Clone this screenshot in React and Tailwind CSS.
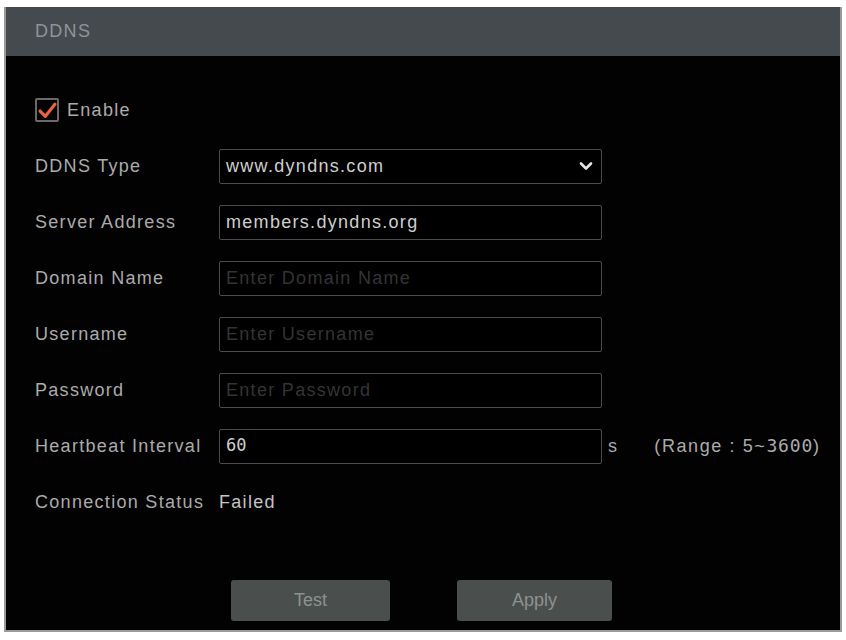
import React from "react";

const sans = "font-['Liberation_Sans',Arial,sans-serif]";
const mono = "font-['DejaVu_Sans_Mono',monospace]";

const Row = ({ label, children }) => (
  <div className="flex h-[56px] items-center">
    <div className="w-[184px] shrink-0 text-[#ababab]">{label}</div>
    {children}
  </div>
);

const Field = ({ value, placeholder, className = "" }) => (
  <div
    className={`flex h-[35px] w-[383px] items-center rounded-[2px] border border-[#4a4a4a] bg-black pl-[6px] ${className}`}
  >
    {value ? (
      <span className="text-[#cfcfcf]">{value}</span>
    ) : (
      <span className="text-[#343434]">{placeholder}</span>
    )}
  </div>
);

export default function App() {
  return (
    <div className={`h-[640px] w-[846px] bg-white px-[4px] pt-[7px] ${sans}`}>
      <div className="flex h-[625px] w-[838px] flex-col border-x-2 border-b-2 border-[#9a9a9a] bg-[#020203]">
        {/* title bar */}
        <div className="flex h-[49px] shrink-0 items-center bg-[#454a4f] pl-[29px] text-[18px] tracking-[1.3px] text-[#8e9499]">
          DDNS
        </div>

        <div className="flex flex-col pl-[29px] pt-[26px] text-[18px] tracking-[1.3px]">
          <div className="flex h-[56px] items-center gap-[8px]">
            <div className="flex h-[24px] w-[24px] items-center justify-center rounded-[2px] border-2 border-[#6a6a6a]">
              <svg width="19" height="17" viewBox="0 0 18 16">
                <path
                  d="M2 8.5 L7 13.5 L16 2"
                  fill="none"
                  stroke="#e8643a"
                  strokeWidth="3"
                  strokeLinecap="round"
                  strokeLinejoin="round"
                />
              </svg>
            </div>
            <span className="text-[#ababab]">Enable</span>
          </div>

          <Row label="DDNS Type">
            <div className="flex h-[35px] w-[383px] items-center justify-between rounded-[2px] border border-[#4a4a4a] bg-black pl-[6px] pr-[8px]">
              <span className="text-[#cfcfcf]">www.dyndns.com</span>
              <svg width="14" height="10" viewBox="0 0 14 10">
                <path
                  d="M2 2.5 L7 7.5 L12 2.5"
                  fill="none"
                  stroke="#e6e6e6"
                  strokeWidth="2.6"
                  strokeLinecap="round"
                  strokeLinejoin="round"
                />
              </svg>
            </div>
          </Row>

          <Row label="Server Address">
            <Field value="members.dyndns.org" />
          </Row>

          <Row label="Domain Name">
            <Field placeholder="Enter Domain Name" />
          </Row>

          <Row label="Username">
            <Field placeholder="Enter Username" />
          </Row>

          <Row label="Password">
            <Field placeholder="Enter Password" />
          </Row>

          <Row label="Heartbeat Interval">
            <div className="flex h-[35px] w-[383px] items-center rounded-[2px] border border-[#4a4a4a] bg-black pl-[6px]">
              <span className={`${mono} text-[17px] tracking-normal text-[#cfcfcf]`}>60</span>
            </div>
            <span className="ml-[6px] text-[#ababab]">s</span>
            <span className="ml-[36px] tracking-[1.6px] text-[#ababab]">
              (Range : 5~<span className={`${mono} text-[18px] tracking-[0.8px]`}>3600</span>)
            </span>
          </Row>

          <Row label="Connection Status">
            <span className="text-[#c4c4c4]">Failed</span>
          </Row>
        </div>

        {/* actions */}
        <div className="mt-[50px] flex gap-[67px] pl-[225px]">
          <button className="h-[41px] w-[159px] rounded-[3px] bg-[#4a4f4e] text-[18px] text-[#8d9290]">
            Test
          </button>
          <button className="h-[41px] w-[155px] rounded-[3px] bg-[#4a4f4e] text-[18px] text-[#8d9290]">
            Apply
          </button>
        </div>
      </div>
    </div>
  );
}
